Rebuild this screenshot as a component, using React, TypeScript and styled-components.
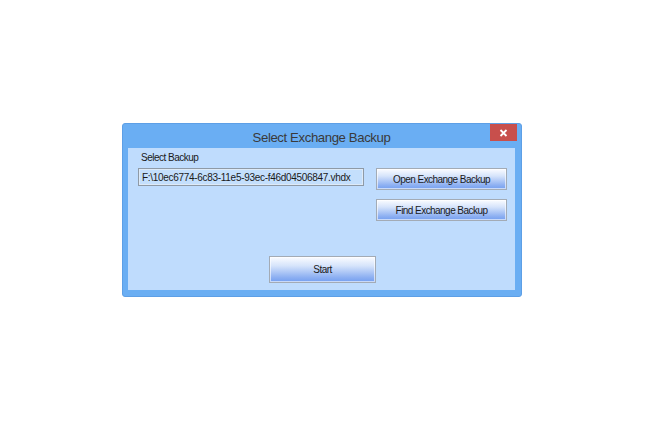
import React from "react";
import styled, { createGlobalStyle } from "styled-components";

const Global = createGlobalStyle`
  html, body { margin: 0; padding: 0; background: #ffffff; }
  body { width: 645px; height: 421px; overflow: hidden; }
`;

const Page = styled.div`
  padding: 123px 0 0 122px;
`;

const Window = styled.div`
  width: 400px;
  height: 174px;
  box-sizing: border-box;
  background: #6aaef3;
  border: 1px solid #5d9fe6;
  border-radius: 3px;
  padding: 0 6px 6px 5px;
  display: flex;
  flex-direction: column;
`;

const TitleBar = styled.div`
  position: relative;
  height: 24px;
  display: flex;
  align-items: center;
  justify-content: center;
`;

const Title = styled.span`
  font-family: "Liberation Sans", Arial, sans-serif;
  font-size: 13.2px;
  letter-spacing: -0.4px;
  color: #3a3a3a;
  padding-top: 2px;
`;

const CloseButton = styled.div`
  position: absolute;
  right: -2px;
  top: 0px;
  width: 27px;
  height: 17px;
  background: #c84f4c;
  display: flex;
  align-items: center;
  justify-content: center;
`;

const Client = styled.div`
  flex: 1;
  background: #bfdcfd;
  display: flex;
  flex-direction: column;
  padding: 4px 8px 7px 10px;
  font-family: "Liberation Sans", Arial, sans-serif;
  font-size: 10px;
  letter-spacing: -0.45px;
  color: #1a1a1a;
`;

const TopArea = styled.div`
  display: flex;
  gap: 12px;
`;

const LeftColumn = styled.div`
  display: flex;
  flex-direction: column;
  width: 226px;
`;

const Label = styled.div`
  height: 16px;
  padding-left: 3px;
  line-height: 12px;
  letter-spacing: -0.5px;
`;

const Field = styled.div`
  height: 18px;
  box-sizing: border-box;
  border: 1px solid #8f9aa6;
  box-shadow: inset 0 0 0 1px #ddeaf8;
  background: #c4dffc;
  padding-left: 3px;
  display: flex;
  align-items: center;
  letter-spacing: -0.3px;
`;

const RightColumn = styled.div`
  display: flex;
  flex-direction: column;
  gap: 9px;
  padding-top: 16px;
`;

const Button = styled.div<{ $w: number; $h: number }>`
  width: ${(p) => p.$w}px;
  height: ${(p) => p.$h}px;
  box-sizing: border-box;
  border: 1px solid #a3abb5;
  background: linear-gradient(to bottom, #fbfcff 0%, #d6e4fb 35%, #8fb1f2 80%, #749ff0 100%);
  box-shadow: inset 0 0 0 1px rgba(255, 255, 255, 0.6);
  display: flex;
  align-items: center;
  justify-content: center;
  letter-spacing: -0.55px;
`;

const BottomArea = styled.div`
  margin-top: auto;
  display: flex;
  justify-content: center;
`;

export default function App() {
  return (
    <>
      <Global />
      <Page>
        <Window>
          <TitleBar>
            <Title>Select Exchange Backup</Title>
            <CloseButton>
              <svg width="9" height="8" viewBox="0 0 9 8">
                <path d="M1.5 1 L7.5 7 M7.5 1 L1.5 7" stroke="#ffffff" strokeWidth="1.8" />
              </svg>
            </CloseButton>
          </TitleBar>
          <Client>
            <TopArea>
              <LeftColumn>
                <Label>Select Backup</Label>
                <Field>F:\10ec6774-6c83-11e5-93ec-f46d04506847.vhdx</Field>
              </LeftColumn>
              <RightColumn>
                <Button $w={131} $h={22}>Open Exchange Backup</Button>
                <Button $w={131} $h={22}>Find Exchange Backup</Button>
              </RightColumn>
            </TopArea>
            <BottomArea>
              <Button $w={107} $h={27}>Start</Button>
            </BottomArea>
          </Client>
        </Window>
      </Page>
    </>
  );
}
